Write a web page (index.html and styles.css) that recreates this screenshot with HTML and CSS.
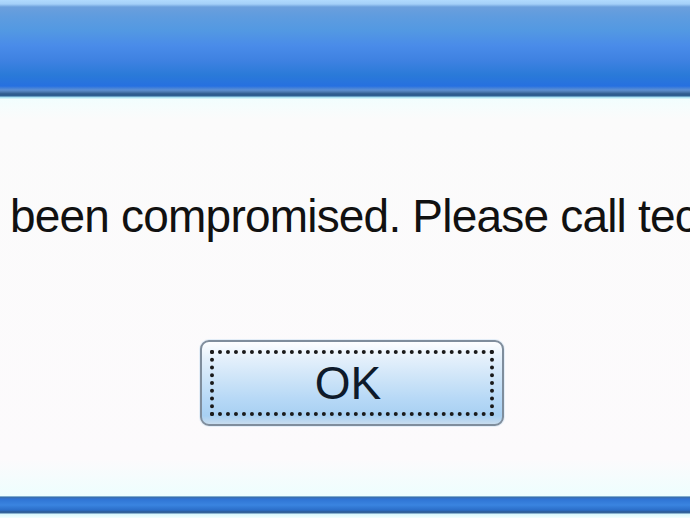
FILE: index.html
```html
<!DOCTYPE html>
<html>
<head>
<link rel="stylesheet" href="styles.css">
</head>
<body>
  <div class="window">
    <div class="titlebar"></div>
    <div class="dialog-body">
      <p class="message">been compromised. Please call technical support immediately.</p>
      <div class="actions">
        <button class="ok-button"><span class="focus-ring">OK</span></button>
      </div>
    </div>
    <div class="frame-bottom"></div>
  </div>
</body>
</html>
```

FILE: styles.css
```css
* {
  box-sizing: border-box;
  margin: 0;
  padding: 0;
}
body {
  width: 690px;
  height: 518px;
  overflow: hidden;
  background: #fbfbfb;
  font-family: "Liberation Sans", Arial, sans-serif;
}
.window {
  display: flex;
  flex-direction: column;
  height: 518px;
}
.titlebar {
  height: 99px;
  flex: none;
  background: linear-gradient(to bottom,
    #b0dafd 0px, #a4d0f8 4px,
    #6b9fdc 7px, #5f9cdf 16px,
    #5399e2 30px, #4a8ce9 45px,
    #3f82e2 60px, #2a7ad8 75px,
    #2670e0 86px, #5d8fd2 90px,
    #4a78b0 92px, #2d5a8c 94px,
    #2f5f94 96px, #9fdcf0 97px,
    #e6fcfe 99px);
}
.dialog-body {
  flex: 1;
  display: flex;
  flex-direction: column;
  background: linear-gradient(to bottom, #f2fefe 0px, #fbfbfb 20px, #fcfafc 360px, #eefefe 397px);
  overflow: hidden;
}
.message {
  margin-top: 89px;
  padding-left: 10px;
  font-size: 46px;
  line-height: 56px;
  letter-spacing: -0.8px;
  color: #111;
  white-space: nowrap;
}
.actions {
  display: flex;
  justify-content: flex-start;
  padding-left: 200px;
  margin-top: 96px;
}
.ok-button {
  width: 304px;
  height: 86px;
  border: 2px solid #7f8d9c;
  border-radius: 9px;
  padding: 8px 8px;
  background: linear-gradient(to bottom, #fdfeff 0%, #e4f0fb 20%, #cde4f8 45%, #b6d8f6 70%, #a8d0f2 90%, #c8dcee 100%);
  box-shadow: 0 0 0 1px #e4eef8;
  font-family: inherit;
  cursor: pointer;
}
.focus-ring {
  display: flex;
  align-items: center;
  justify-content: center;
  height: 100%;
  padding-right: 8px;
  border: 4px dotted #1a1a1a;
  font-size: 46px;
  color: #0e1a2a;
}
.frame-bottom {
  height: 22px;
  flex: none;
  background: linear-gradient(to bottom,
    #c2eef8 0px, #3e6ea6 1px,
    #2f74d4 3px, #3a84e0 9px,
    #2b6ec8 14px, #2d5a92 16px,
    #3a6aa0 17px, #d8f8fc 18px, #f4fefe 22px);
}
```
